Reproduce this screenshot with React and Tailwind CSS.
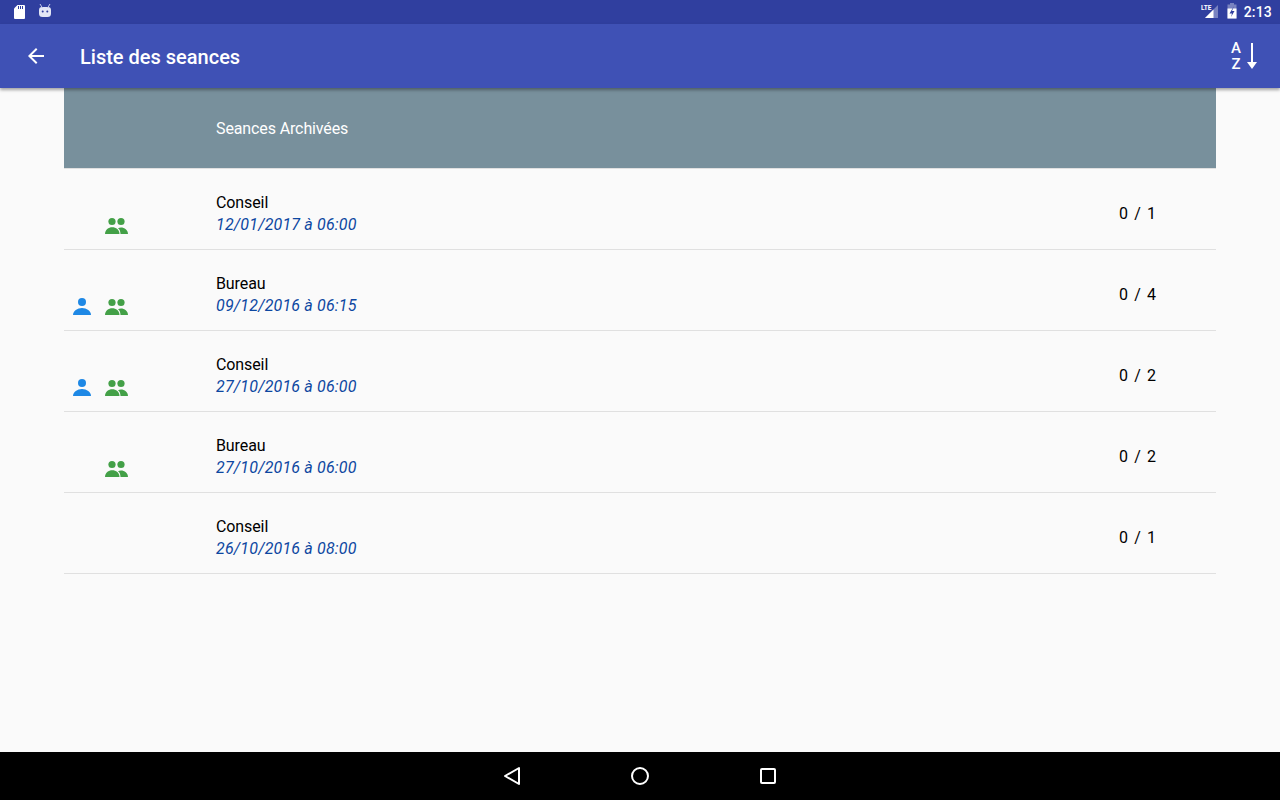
import React from "react";

const Person = ({ className }) => (
  <svg width="24" height="24" viewBox="0 0 24 24" className={className} fill="#1e88e5">
    <circle cx="12" cy="7" r="4" />
    <path d="M3 20c0-4 4.400-7 9-7s9 3 9 7z" />
  </svg>
);

const Group = ({ className }) => (
  <svg width="24" height="24" viewBox="0 0 24 24" className={className} fill="#43a047">
    <circle cx="7" cy="7.500" r="3.600" />
    <circle cx="16" cy="7.500" r="3.600" />
    <path d="M0 20c0-4 3.500-6.700 7.250-6.700S14.500 16 14.500 20z" />
    <path d="M15.500 20c0-2.500-.8-4.500-2.500-5.700.8-.5 2-.8 3-.8 3.500 0 7 2.500 7 6.500z" />
  </svg>
);

const rows = [
  { t: "Conseil", d: "12/01/2017 à 06:00", c: "0 / 1", p: false, g: true },
  { t: "Bureau", d: "09/12/2016 à 06:15", c: "0 / 4", p: true, g: true },
  { t: "Conseil", d: "27/10/2016 à 06:00", c: "0 / 2", p: true, g: true },
  { t: "Bureau", d: "27/10/2016 à 06:00", c: "0 / 2", p: false, g: true },
  { t: "Conseil", d: "26/10/2016 à 08:00", c: "0 / 1", p: false, g: false },
];

export default function App() {
  return (
    <div className="w-[1280px] h-[800px] flex flex-col overflow-hidden bg-[#fafafa] font-['Roboto',sans-serif]">
      <div className="h-6 bg-[#303f9f] flex items-center justify-between shrink-0">
        <div className="flex items-center pl-3 gap-3">
          <svg width="14" height="24" viewBox="0 0 14 24" fill="#fff">
            <path d="M5.500 5H12a1 1 0 0 1 1 1v12a1 1 0 0 1-1 1H3a1 1 0 0 1-1-1V8.500z" />
            <path d="M6.500 6v3M8.500 6v3M10.500 6v3" stroke="#303f9f" strokeWidth="1" />
          </svg>
          <svg width="14" height="24" viewBox="0 0 14 24" fill="#e3e6f5">
            <path d="M1 10a3 3 0 0 1 3-3h6a3 3 0 0 1 3 3v3.500a3.500 3.500 0 0 1-3.500 3.500h-5A3.500 3.500 0 0 1 1 13.500z" />
            <path d="M2 4l2.500 4M12 4L9.500 8" stroke="#c5cae9" strokeWidth="1" />
            <circle cx="4.700" cy="11.500" r="1" fill="#303f9f" />
            <circle cx="9.300" cy="11.500" r="1" fill="#303f9f" />
          </svg>
        </div>
        <div className="flex items-center pr-2">
          <svg width="20" height="24" viewBox="0 0 20 24" className="mr-[6px]">
            <path d="M17 5v13H4z" fill="#fff" fillOpacity="0.35" />
            <path d="M12.500 9.500V18H4z" fill="#fff" />
            <text x="0" y="10" fontSize="6.500" fontWeight="700" fill="#fff" fontFamily="Roboto, sans-serif">LTE</text>
          </svg>
          <svg width="10" height="24" viewBox="0 0 10 24" className="mr-[7px]">
            <path d="M3 3h4v1.500h2.500V18.500H.5V4.500H3z" fill="#fff" fillOpacity="0.35" />
            <path d="M.5 8.500h9v10h-9z" fill="#fff" />
            <path d="M7 6L2.500 13.500h2.500l-1 3.500 3.500-6H5z" fill="#303f9f" />
          </svg>
          <span className="text-white text-sm font-medium leading-none tracking-[0.2px]">2:13</span>
        </div>
      </div>

      <div className="h-16 bg-[#3f51b5] flex items-center shrink-0 relative z-10 shadow-[0_2px_3px_rgba(0,0,0,0.35)]">
        <svg width="24" height="24" viewBox="0 0 24 24" className="ml-6" fill="#fff">
          <path d="M20 11H7.830l5.590-5.590L12 4l-8 8 8 8 1.410-1.410L7.830 13H20v-2z" />
        </svg>
        <span className="ml-8 pt-[2px] text-white text-xl font-medium">Liste des seances</span>
        <div className="ml-auto mr-[23px] flex items-center">
          <div className="flex flex-col items-center text-white text-[15px] font-medium leading-4 mr-[6px]">
            <span>A</span>
            <span>Z</span>
          </div>
          <svg width="10" height="28" viewBox="0 0 10 28" fill="#fff">
            <rect x="4" y="1" width="2" height="21" />
            <path d="M0 20h10l-5 7z" />
          </svg>
        </div>
      </div>

      <div className="flex-1 px-16">
        <div className="h-20 bg-[#78909c] flex items-center pl-[152px] pt-[2px] text-white text-base tracking-[-0.12px]">Seances Archivées</div>
        <div className="h-px bg-[#e0e0e0]" />
        {rows.map((r, i) => (
          <div key={i} className="h-[81px] border-b border-[#e0e0e0] flex relative">
            <div className="w-[152px] shrink-0 flex items-end pb-[11px] pl-[6px] gap-[8px]">
              <span className="w-6 h-6">{r.p && <Person />}</span>
              <span className="w-6 h-6 ml-[3px]">{r.g && <Group />}</span>
            </div>
            <div className="flex flex-col justify-center pt-[9px]">
              <span className="text-base leading-[22px] text-black tracking-[-0.1px]">{r.t}</span>
              <span className="text-base leading-[22px] italic text-[#0d47a1] tracking-[0.17px]">{r.d}</span>
            </div>
            <div className="ml-auto w-[97px] flex items-center pt-[10px] text-base text-black whitespace-pre tracking-[1.1px]">
              {r.c}
            </div>
          </div>
        ))}
      </div>

      <div className="h-12 bg-black flex items-center justify-center shrink-0 gap-[104px]">
        <svg width="24" height="24" viewBox="0 0 24 24" fill="none" stroke="#fff" strokeWidth="2" strokeLinejoin="round">
          <path d="M19 4v16L5 12z" />
        </svg>
        <svg width="24" height="24" viewBox="0 0 24 24" fill="none" stroke="#fff" strokeWidth="2">
          <circle cx="12" cy="12" r="8" />
        </svg>
        <svg width="24" height="24" viewBox="0 0 24 24" fill="none" stroke="#fff" strokeWidth="2" strokeLinejoin="round">
          <rect x="5" y="5" width="14" height="14" rx="1" />
        </svg>
      </div>
    </div>
  );
}
